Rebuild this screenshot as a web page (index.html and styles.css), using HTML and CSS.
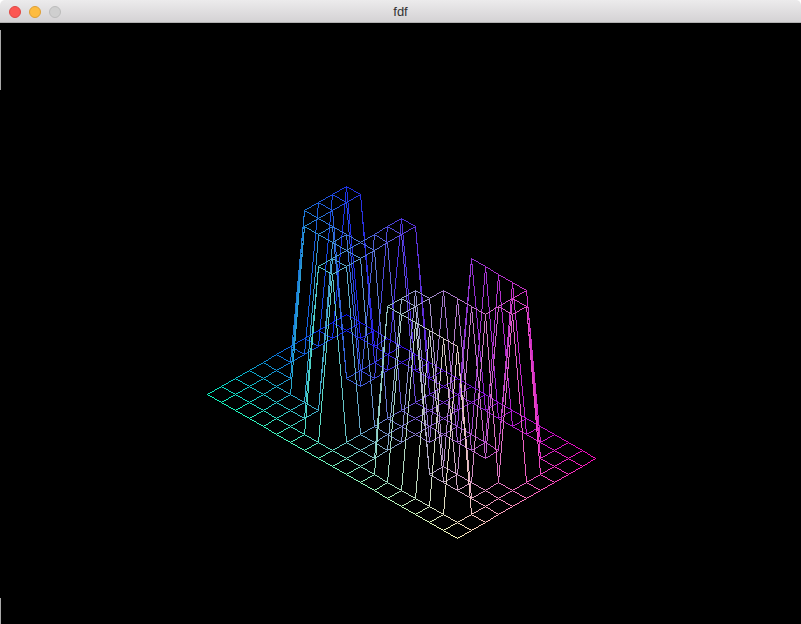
FILE: index.html
```html
<!DOCTYPE html>
<html lang="en">
<head>
<meta charset="UTF-8">
<title>fdf</title>
<link rel="stylesheet" href="styles.css">
</head>
<body>
<div class="window">
  <header class="titlebar">
    <div class="lights">
      <span class="light red"></span>
      <span class="light yellow"></span>
      <span class="light off"></span>
    </div>
    <span class="title">fdf</span>
  </header>
  <div class="view">
    <canvas id="fdf" width="800" height="601"></canvas>
  </div>
</div>
<script src="fdf.js"></script>
</body>
</html>
```

FILE: styles.css
```css
html, body {
  margin: 0;
  padding: 0;
  background-color: #fff;
  overflow: hidden;
}

.window {
  width: 801px;
  height: 624px;
  display: flex;
  flex-direction: column;
  border-radius: 5px 5px 0 0;
  overflow: hidden;
}

.titlebar {
  flex: 0 0 22px;
  position: relative;
  display: flex;
  align-items: center;
  justify-content: center;
  background: linear-gradient(#ecebec, #d4d2d4);
  border-bottom: 1px solid #b1b1b1;
}

.lights {
  position: absolute;
  left: 9px;
  top: 6px;
  display: flex;
  gap: 8px;
}

.light {
  width: 12px;
  height: 12px;
  box-sizing: border-box;
  border-radius: 50%;
  border: 1px solid;
}

.red {
  background-color: #fc5753;
  border-color: #df4744;
}

.yellow {
  background-color: #fdbc40;
  border-color: #de9f34;
}

.off {
  background-color: #cfcfcf;
  border-color: #bcbcbc;
}

.title {
  font-family: "Liberation Sans", Arial, sans-serif;
  font-size: 13px;
  color: #333;
}

.view {
  flex: 1;
  display: flex;
  background-color: #000;
  border-left: 1px solid #000;
  border-image: linear-gradient(#000 0, #000 8px, #a8a8a8 8px, #a8a8a8 68px, #000 68px, #000 574px, #a8a8a8 574px, #a8a8a8 100%) 1;
}

canvas {
  display: block;
}
```

FILE: fdf.js
```js
// 42.fdf height map
var map = [
  [0,0,0,0,0,0,0,0,0,0,0,0,0,0,0,0,0,0,0],
  [0,0,0,0,0,0,0,0,0,0,0,0,0,0,0,0,0,0,0],
  [0,0,10,10,0,0,10,10,0,0,0,10,10,10,10,10,0,0,0],
  [0,0,10,10,0,0,10,10,0,0,0,0,0,0,0,10,10,0,0],
  [0,0,10,10,0,0,10,10,0,0,0,0,0,0,0,10,10,0,0],
  [0,0,10,10,10,10,10,10,0,0,0,0,10,10,10,10,0,0,0],
  [0,0,0,10,10,10,10,10,0,0,0,10,10,0,0,0,0,0,0],
  [0,0,0,0,0,0,10,10,0,0,0,10,10,0,0,0,0,0,0],
  [0,0,0,0,0,0,10,10,0,0,0,10,10,10,10,10,10,0,0],
  [0,0,0,0,0,0,0,0,0,0,0,0,0,0,0,0,0,0,0],
  [0,0,0,0,0,0,0,0,0,0,0,0,0,0,0,0,0,0,0]
];

var ctx = document.getElementById("fdf").getContext("2d");
var TOP = 23; // canvas starts under the title bar
var LEFT = 1;

function project(x, y) {
  var u = x / 18;
  var v = y / 10;
  return {
    px: Math.round(345.8 + 13.87 * (x - y)) - LEFT,
    py: Math.round(313.6 + 8 * (x + y) - 16 * map[y][x]) - TOP,
    r: 10 + Math.pow(u, 1.15) * 245,
    g: 15 + Math.pow(v, 1.15) * 235,
    b: 248 - 55 * (1 - (1 - u) * (1 - v))
  };
}

function line(a, b) {
  var steps = Math.max(Math.abs(b.px - a.px), Math.abs(b.py - a.py));
  for (var i = 0; i <= steps; i++) {
    var t = steps ? i / steps : 0;
    var r = Math.round(a.r + (b.r - a.r) * t);
    var g = Math.round(a.g + (b.g - a.g) * t);
    var c = Math.round(a.b + (b.b - a.b) * t);
    ctx.fillStyle = "rgb(" + r + "," + g + "," + c + ")";
    ctx.fillRect(Math.round(a.px + (b.px - a.px) * t), Math.round(a.py + (b.py - a.py) * t), 1, 1);
  }
}

for (var y = 0; y < map.length; y++) {
  for (var x = 0; x < map[y].length; x++) {
    if (x < 18) line(project(x, y), project(x + 1, y));
    if (y < 10) line(project(x, y), project(x, y + 1));
  }
}
```
